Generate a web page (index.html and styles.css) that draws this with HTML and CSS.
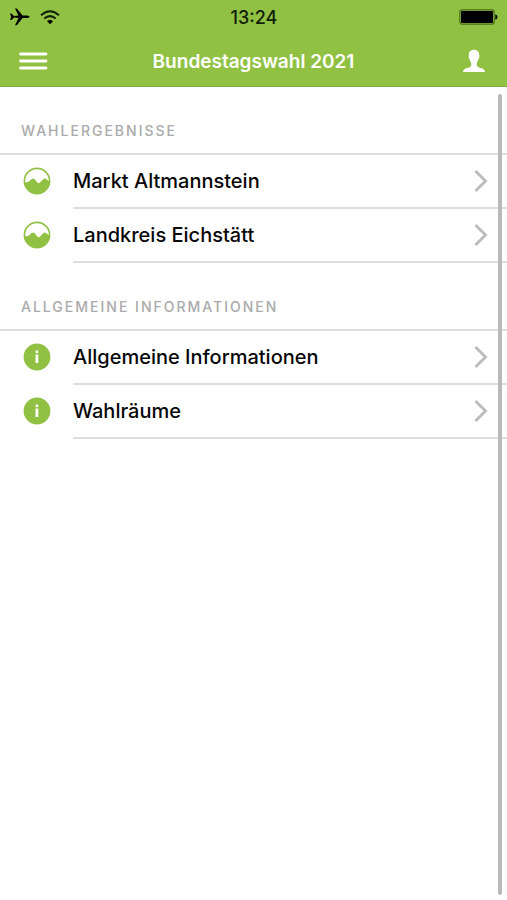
FILE: index.html
```html
<!DOCTYPE html>
<html lang="de">
<head>
  <meta charset="utf-8">
  <meta name="viewport" content="width=device-width, initial-scale=1">
  <title>Bundestagswahl 2021</title>
  <link rel="stylesheet" href="styles.css">
</head>
<body>
  <svg class="sprite" aria-hidden="true">
    <symbol id="results" viewBox="0 0 28 28">
      <circle cx="14" cy="14" r="12.6" fill="none" stroke="#90c143" stroke-width="1.6"/>
      <path fill="#90c143" d="M.8 15C3 15.600 5 15.300 6.500 14L8.700 12Q10.200 10.800 11.600 12.300L14.400 15.600Q15.600 16.800 17 15.500L20.300 12.200Q22 10.800 23.600 12.400L27.200 15A13.300 13.300 0 0 1 .8 15Z"/>
    </symbol>
    <symbol id="info" viewBox="0 0 28 28">
      <circle cx="14" cy="14" r="13.4" fill="#90c143"/>
      <circle cx="13.900" cy="8.800" r="1.500" fill="#fff"/>
      <path fill="#fff" d="M12.500 11.500h2.800v8.500h-2.800z"/>
    </symbol>
    <symbol id="chevron" viewBox="0 0 14 24">
      <path fill="none" stroke="#bbb" stroke-width="2.800" d="M1.500 2L11.500 12L1.500 22"/>
    </symbol>
  </svg>

  <header class="header">
    <div class="status">
      <div class="status-side">
        <svg width="20" height="18" viewBox="0 0 20 18" aria-hidden="true">
          <path d="M0 5.500H1.400L4 8L8.500 7.600L5 .4H6.800L12.600 7.500H17.500Q19.600 8 19.600 8.800Q19.600 9.600 17.500 10.100H12.600L6.800 17.200H5L8.500 10L4 9.600L1.400 12.100H0L1.200 8.800Z"/>
        </svg>
        <svg width="20" height="15" viewBox="0 0 20 15" aria-hidden="true">
          <path fill="none" stroke="#10200a" stroke-width="2" d="M1 5.200Q10-2.800 19 5.200M4.300 8.600Q10 3.600 15.700 8.600"/>
          <path d="M7 11.200Q10 8.600 13 11.200L10 14.300Z"/>
        </svg>
      </div>
      <span class="time">13:24</span>
      <div class="status-side status-end">
        <svg width="39" height="16" viewBox="0 0 39 16" aria-hidden="true">
          <rect x=".8" y=".8" width="34.400" height="14.400" rx="2.500" fill="none" stroke="#4d6b1d" stroke-width="1.200"/>
          <rect x="2" y="2" width="32" height="12" rx="1"/>
          <path d="M36.300 5.200Q38.500 6 38.500 8Q38.500 10 36.300 10.800Z"/>
        </svg>
      </div>
    </div>
    <nav class="bar">
      <button class="icon-button" type="button" aria-label="Menü">
        <svg width="30" height="20" viewBox="0 0 30 20" aria-hidden="true">
          <path fill="none" stroke="#fff" stroke-width="2.800" stroke-linecap="round" d="M2.500 3H28M2.500 10H28M2.500 17H28"/>
        </svg>
      </button>
      <h1 class="title">Bundestagswahl 2021</h1>
      <button class="icon-button" type="button" aria-label="Profil">
        <svg width="24" height="24" viewBox="0 0 24 24" aria-hidden="true">
          <path fill="#fff" d="M12 .8C8.500 .8 6.500 3 6.800 6.500C6.300 7.500 6.700 9.200 7.400 10C7.700 11.500 8.400 12.800 9.200 13.800V16.500C9 18.200 5.500 18.800 3.500 19.600Q1 20.700 1 23H23Q23 20.700 20.500 19.600C18.500 18.800 15 18.200 14.800 16.500V13.800C15.600 12.800 16.300 11.500 16.600 10C17.300 9.200 17.700 7.500 17.200 6.500C17.500 3 15.500 .8 12 .8Z"/>
        </svg>
      </button>
    </nav>
  </header>

  <main class="content">
    <section>
      <h2 class="heading">Wahlergebnisse</h2>
      <ul class="list">
        <li><a class="row" href="#altmannstein"><svg class="row-icon" aria-hidden="true"><use href="#results"/></svg><span class="row-body">Markt Altmannstein<svg class="chevron" aria-hidden="true"><use href="#chevron"/></svg></span></a></li>
        <li><a class="row" href="#eichstaett"><svg class="row-icon" aria-hidden="true"><use href="#results"/></svg><span class="row-body">Landkreis Eichstätt<svg class="chevron" aria-hidden="true"><use href="#chevron"/></svg></span></a></li>
      </ul>
    </section>
    <section>
      <h2 class="heading">Allgemeine Informationen</h2>
      <ul class="list">
        <li><a class="row" href="#informationen"><svg class="row-icon" aria-hidden="true"><use href="#info"/></svg><span class="row-body">Allgemeine Informationen<svg class="chevron" aria-hidden="true"><use href="#chevron"/></svg></span></a></li>
        <li><a class="row" href="#wahlraeume"><svg class="row-icon" aria-hidden="true"><use href="#info"/></svg><span class="row-body">Wahlräume<svg class="chevron" aria-hidden="true"><use href="#chevron"/></svg></span></a></li>
      </ul>
    </section>
    <div class="scroll-thumb" aria-hidden="true"></div>
  </main>
</body>
</html>
```
FILE: styles.css
```css
* {
  box-sizing: border-box;
}

body {
  display: flex;
  flex-direction: column;
  min-height: 100vh;
  margin: 0;
  background: #fff;
  color: #080808;
  font-family: Inter, "Liberation Sans", sans-serif;
}

svg {
  display: block;
  flex: none;
}

.sprite {
  position: absolute;
  width: 0;
  height: 0;
}

.header {
  background: #90c143;
  border-bottom: 1px solid #82ad3d;
}

.status {
  display: flex;
  align-items: center;
  height: 34px;
  padding: 0 9px 0 10px;
}

.status-side {
  display: flex;
  flex: 1;
  align-items: center;
  gap: 10px;
}

.status-end {
  justify-content: flex-end;
}

.time {
  color: #10200a;
  font-size: 18px;
  font-weight: 500;
}

.bar {
  display: flex;
  align-items: center;
  justify-content: space-between;
  height: 52px;
  padding: 2px 18px 0;
}

.icon-button {
  display: flex;
  align-items: center;
  width: 30px;
  height: 44px;
  padding: 0;
  border: 0;
  background: none;
}

.bar .icon-button:last-child {
  justify-content: center;
}

.title {
  margin: 0;
  color: #fff;
  font-size: 19px;
  font-weight: 600;
}

.content {
  position: relative;
  flex: 1;
}

.heading {
  display: flex;
  align-items: center;
  height: 68px;
  margin: 0;
  padding: 20px 21px 0;
  border-bottom: 2px solid #ddd;
  color: #aaa;
  font-size: 14px;
  font-weight: 500;
  letter-spacing: 2px;
  text-transform: uppercase;
}

.list {
  margin: 0;
  padding: 0;
  list-style: none;
}

.row {
  display: flex;
  align-items: center;
  gap: 22px;
  padding-left: 23px;
  color: inherit;
  text-decoration: none;
}

.row-icon {
  width: 28px;
  height: 28px;
  margin-bottom: 2px;
}

.row-body {
  display: flex;
  flex: 1;
  align-items: center;
  justify-content: space-between;
  height: 54px;
  padding-right: 19px;
  border-bottom: 2px solid #ddd;
  font-size: 20px;
  font-weight: 500;
}

.chevron {
  width: 14px;
  height: 24px;
}

.scroll-thumb {
  position: absolute;
  top: 7px;
  right: 5px;
  bottom: 5px;
  width: 4px;
  border-radius: 2px;
  background: #bababa;
}
```
